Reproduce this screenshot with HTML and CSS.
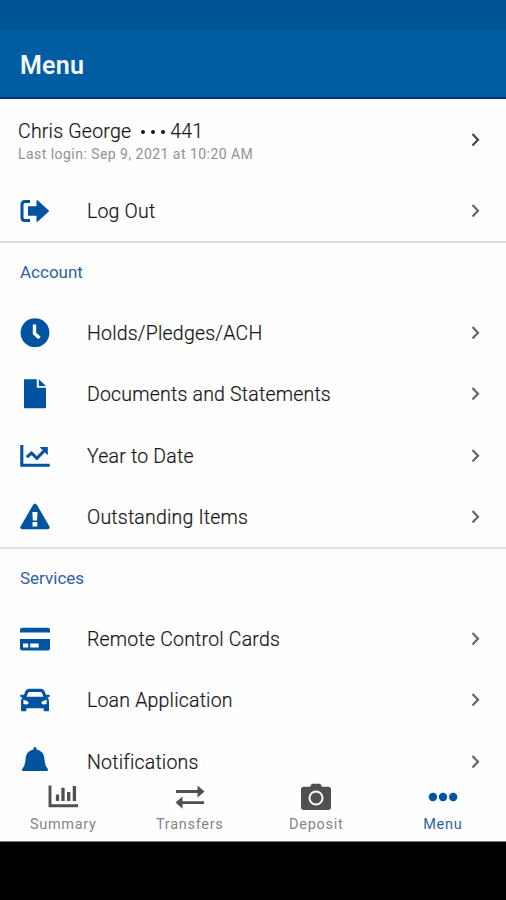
FILE: index.html
```
<!DOCTYPE html>
<html lang="en">
<head>
<meta charset="utf-8">
<title>Menu</title>
<link rel="stylesheet" href="styles.css">
</head>
<body>
<svg class="defs" width="0" height="0"><defs><symbol id="chev" viewBox="0 0 12 16"><path d="M2.500 2l5.500 5.700-5.500 5.700" fill="none" stroke="currentColor" stroke-width="2.200"/></symbol></defs></svg>
<div class="screen">
  <div class="status"></div>
  <header class="header"><h1>Menu</h1></header>
  <main class="list">
    <div class="profile">
      <div class="who">
        <div class="name"><span>Chris George</span><span class="dots"><i></i><i></i><i></i></span><span>441</span></div>
        <div class="last">Last login: Sep 9, 2021 at 10:20 AM</div>
      </div>
      <svg class="chev dark"><use href="#chev"/></svg>
    </div>
    <div class="row">
      <svg class="icon" viewBox="0 0 32 32"><path d="M11 6.600H6Q3 6.600 3 9.600v12.800q0 3 3 3h5" fill="none" stroke="currentColor" stroke-width="3"/><path d="M9 11.200h8.500V6q0-1.600 1.300-.5l11 9.900q.7.6 0 1.200l-11 9.900q-1.300 1.100-1.300-.5v-5.200H9z"/></svg>
      <span class="label">Log Out</span><svg class="chev"><use href="#chev"/></svg>
    </div>
    <section>
      <h2>Account</h2>
      <div class="row">
        <svg class="icon" viewBox="0 0 32 32"><circle cx="16" cy="15.700" r="14.400"/><path d="M15.500 7.400v9l5 4.500" fill="none" stroke="#fff" stroke-width="3.400"/></svg>
        <span class="label">Holds/Pledges/ACH</span><svg class="chev"><use href="#chev"/></svg>
      </div>
      <div class="row">
        <svg class="icon" viewBox="0 0 32 32"><path d="M5 1.200h12.800v8.500H27v19.600q0 1-1 1H6q-1 0-1-1z"/><path d="M19.800 1.200l7.200 6.700h-7.200z"/></svg>
        <span class="label">Documents and Statements</span><svg class="chev"><use href="#chev"/></svg>
      </div>
      <div class="row">
        <svg class="icon" viewBox="0 0 32 32"><path d="M2.800 5v20.200h27.900M7.800 17.200l4.800-4.200 5.300 5.300L25 11" fill="none" stroke="currentColor" stroke-width="3.100"/><path d="M20.600 7h8.200v8.200z"/></svg>
        <span class="label">Year to Date</span><svg class="chev"><use href="#chev"/></svg>
      </div>
      <div class="row">
        <svg class="icon" viewBox="0 0 32 32"><path d="M14 4q2-3.200 4 0l12.300 21.200q1.300 3-1.700 3H3.400q-3 0-1.700-3z"/><path fill="#fff" d="M13.300 11h5.200l-.5 8.500h-4.200zM13.500 21h4.800v4.600h-4.800z"/></svg>
        <span class="label">Outstanding Items</span><svg class="chev"><use href="#chev"/></svg>
      </div>
    </section>
    <section>
      <h2>Services</h2>
      <div class="row">
        <svg class="icon" viewBox="0 0 32 32"><path d="M3.200 4.800h25.600q2.200 0 2.200 2.200v2.600H1V7q0-2.200 2.200-2.200zM1 16h30v9.200q0 2.200-2.200 2.200H3.200Q1 27.400 1 25.200z"/><path fill="#fff" d="M4 20.400h5.200v4H4zM11.200 20.400h8.500v4h-8.500z"/></svg>
        <span class="label">Remote Control Cards</span><svg class="chev"><use href="#chev"/></svg>
      </div>
      <div class="row">
        <svg class="icon" viewBox="0 0 32 32"><path fill-rule="evenodd" d="M10 4.700h12q2.600 0 3.600 2.500l1.400 3.600h3.400q1 1.400-.4 2.400l-1.600.5q1.600 1.300 1.600 3.500v9q0 1-1 1h-3.400q-1 0-1-1v-2H7.400v2q0 1-1 1H3q-1 0-1-1v-9q0-2.200 1.600-3.500L2 13.200q-1.400-1-.4-2.400H5l1.400-3.600q1-2.500 3.600-2.500zM10.500 8q-1.200 0-1.500 1l-1.400 3.800h16.800L23 9q-.3-1-1.500-1zM4.400 15.700v4.400q5.200 1 5.200-1 0-2.200-5.200-3.400zm23.200 0q-5.200 1.200-5.200 3.400 0 2 5.200 1z"/></svg>
        <span class="label">Loan Application</span><svg class="chev"><use href="#chev"/></svg>
      </div>
      <div class="row">
        <svg class="icon" viewBox="0 0 32 32"><path d="M14.400 3.500v-1q0-1.500 1.600-1.500t1.600 1.500v1q7.400 1.400 7.900 10 .4 6.500 3.100 9.200 1.300 2.300-1 2.300H4.400q-2.300 0-1-2.300 2.700-2.700 3.100-9.200.5-8.600 7.900-10z"/></svg>
        <span class="label">Notifications</span><svg class="chev"><use href="#chev"/></svg>
      </div>
    </section>
  </main>
  <nav class="tabs">
    <div class="tab"><svg viewBox="0 0 32 32"><path d="M3 4.500v20.300h28" fill="none" stroke="currentColor" stroke-width="2.900"/><path d="M10.500 13.500V20M16 6.800V20M21.700 11v9M27.400 5v15" fill="none" stroke="currentColor" stroke-width="3.300"/></svg><span>Summary</span></div>
    <div class="tab"><svg viewBox="0 0 32 32"><path d="M2 10.500h22M8 21.600h22" fill="none" stroke="currentColor" stroke-width="2.800"/><path d="M23.500 4.400l7 6.100-7 6.100zM8.500 15.500l-7 6.100 7 6.100z"/></svg><span>Transfers</span></div>
    <div class="tab"><svg viewBox="0 0 32 32"><path d="M4 5.700h6l1.300-2.200q.3-.7 1.200-.7h7q.9 0 1.200.7L22 5.700h6q3 0 3 2.600v18q0 2.600-3 2.600H4q-3 0-3-2.600v-18q0-2.600 3-2.600z"/><circle cx="16" cy="17" r="6.500" fill="none" stroke="#fff" stroke-width="2"/></svg><span>Deposit</span></div>
    <div class="tab active"><svg viewBox="0 0 32 32"><circle cx="5.900" cy="16" r="4.200"/><circle cx="16" cy="16" r="4.200"/><circle cx="26.200" cy="16" r="4.200"/></svg><span>Menu</span></div>
  </nav>
</div>
</body>
</html>
```

FILE: styles.css
```
* { box-sizing: border-box; }
body { margin: 0; background: #000; font-family: Roboto, "Liberation Sans", sans-serif; }
.defs { display: block; }
.screen { height: 842px; display: flex; flex-direction: column; background: #fefefe; overflow: hidden; }
.status { height: 30px; background: #005596; flex: none; }
.header { height: 69px; flex: none; background: #005da2; border-bottom: 2px solid #003087; padding-left: 20px; display: flex; align-items: center; padding-top: 4px; }
h1 { margin: 0; font-size: 25px; font-weight: 600; color: #f4f9ff; letter-spacing: .2px; }
.list { height: 673px; flex: none; overflow: hidden; }
.profile { height: 82px; display: flex; align-items: center; justify-content: space-between; padding: 0 24px 0 18px; }
.who { padding-top: 4px; }
.name { display: flex; align-items: center; font-size: 19.500px; line-height: 24px; letter-spacing: .22px; color: #161616; font-weight: 300; }
.name, .label { -webkit-text-stroke: .2px currentColor; }
.dots { display: flex; gap: 6px; margin: 0 5px 0 10px; }
.dots i { width: 4px; height: 4px; border-radius: 50%; background: #161616; }
.last { font-size: 14px; line-height: 20px; color: #929292; letter-spacing: .46px; }
.row { height: 61.350px; display: flex; align-items: center; padding: 0 24px 0 19px; }
.profile + .row { height: 60px; }
.icon { width: 32px; height: 32px; flex: none; margin-right: 36px; color: #0053a0; fill: #0053a0; }
.label { flex: 1; font-size: 19.500px; line-height: 24px; font-weight: 300; color: #161616; letter-spacing: .2px; padding-top: 2px; }
.chev { width: 12px; height: 16px; color: #666; flex: none; }
.chev.dark { color: #444; }
section { border-top: 2px solid #dedede; }
section + section { margin-top: -.4px; }
h2 { margin: 0; height: 59.200px; line-height: 59px; padding-left: 20px; font-size: 17px; font-weight: 400; color: #2c62a5; letter-spacing: 0; }
.tabs { height: 70px; flex: none; display: grid; grid-template-columns: repeat(4, 1fr); border-bottom: 1px solid #777; background: #fefefe; }
.tab { display: flex; flex-direction: column; align-items: center; padding-top: 9px; color: #858585; font-size: 14.500px; line-height: 20px; letter-spacing: .7px; }
.tab svg { width: 32px; height: 32px; color: #505050; fill: #505050; }
.tab span { margin-top: 2px; }
.tab.active { color: #2c62a5; }
.tab.active svg { fill: #0053a0; }
```
